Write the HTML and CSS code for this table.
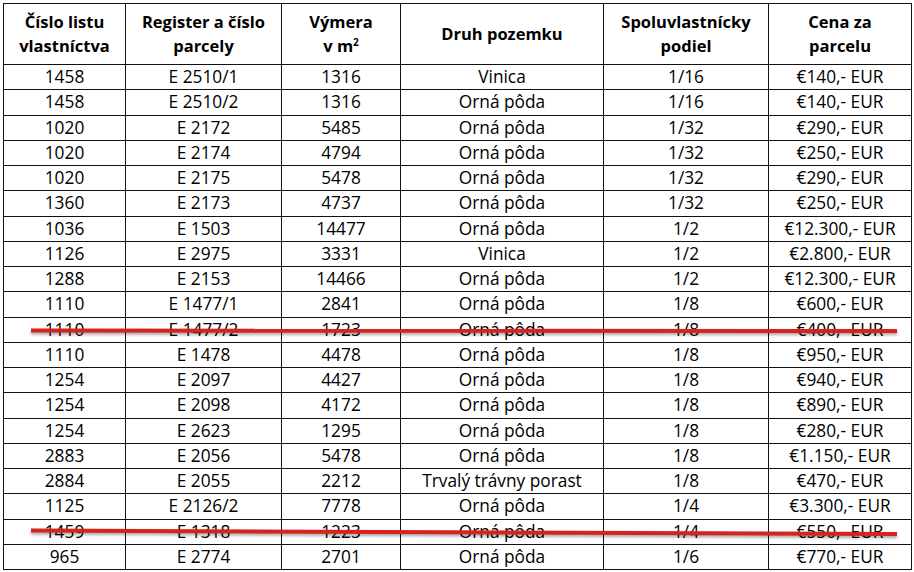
FILE: index.html
```html
<!DOCTYPE html>
<html lang="sk">
<head>
<meta charset="utf-8">
<title>Parcely</title>
<link rel="stylesheet" href="styles.css">
</head>
<body>
<div class="sheet">
<table class="grid">
<colgroup>
<col class="c1"><col class="c2"><col class="c3"><col class="c4"><col class="c5"><col class="c6">
</colgroup>
<thead>
<tr><th>Číslo listu<br>vlastníctva</th><th>Register a číslo<br>parcely</th><th>Výmera<br>v m<sup>2</sup></th><th>Druh pozemku</th><th>Spoluvlastnícky<br>podiel</th><th>Cena za<br>parcelu</th></tr>
</thead>
<tbody>
<tr><td>1458</td><td>E 2510/1</td><td>1316</td><td>Vinica</td><td>1/16</td><td>€140,- EUR</td></tr>
<tr><td>1458</td><td>E 2510/2</td><td>1316</td><td>Orná pôda</td><td>1/16</td><td>€140,- EUR</td></tr>
<tr><td>1020</td><td>E 2172</td><td>5485</td><td>Orná pôda</td><td>1/32</td><td>€290,- EUR</td></tr>
<tr><td>1020</td><td>E 2174</td><td>4794</td><td>Orná pôda</td><td>1/32</td><td>€250,- EUR</td></tr>
<tr><td>1020</td><td>E 2175</td><td>5478</td><td>Orná pôda</td><td>1/32</td><td>€290,- EUR</td></tr>
<tr><td>1360</td><td>E 2173</td><td>4737</td><td>Orná pôda</td><td>1/32</td><td>€250,- EUR</td></tr>
<tr><td>1036</td><td>E 1503</td><td>14477</td><td>Orná pôda</td><td>1/2</td><td>€12.300,- EUR</td></tr>
<tr><td>1126</td><td>E 2975</td><td>3331</td><td>Vinica</td><td>1/2</td><td>€2.800,- EUR</td></tr>
<tr><td>1288</td><td>E 2153</td><td>14466</td><td>Orná pôda</td><td>1/2</td><td>€12.300,- EUR</td></tr>
<tr><td>1110</td><td>E 1477/1</td><td>2841</td><td>Orná pôda</td><td>1/8</td><td>€600,- EUR</td></tr>
<tr><td>1110</td><td>E 1477/2</td><td>1723</td><td>Orná pôda</td><td>1/8</td><td>€400,- EUR</td></tr>
<tr><td>1110</td><td>E 1478</td><td>4478</td><td>Orná pôda</td><td>1/8</td><td>€950,- EUR</td></tr>
<tr><td>1254</td><td>E 2097</td><td>4427</td><td>Orná pôda</td><td>1/8</td><td>€940,- EUR</td></tr>
<tr><td>1254</td><td>E 2098</td><td>4172</td><td>Orná pôda</td><td>1/8</td><td>€890,- EUR</td></tr>
<tr><td>1254</td><td>E 2623</td><td>1295</td><td>Orná pôda</td><td>1/8</td><td>€280,- EUR</td></tr>
<tr><td>2883</td><td>E 2056</td><td>5478</td><td>Orná pôda</td><td>1/8</td><td>€1.150,- EUR</td></tr>
<tr><td>2884</td><td>E 2055</td><td>2212</td><td>Trvalý trávny porast</td><td>1/8</td><td>€470,- EUR</td></tr>
<tr><td>1125</td><td>E 2126/2</td><td>7778</td><td>Orná pôda</td><td>1/4</td><td>€3.300,- EUR</td></tr>
<tr><td>1459</td><td>E 1318</td><td>1223</td><td>Orná pôda</td><td>1/4</td><td>€550,- EUR</td></tr>
<tr><td>965</td><td>E 2774</td><td>2701</td><td>Orná pôda</td><td>1/6</td><td>€770,- EUR</td></tr>
</tbody>
</table>
<svg class="marks" width="907" height="567" viewBox="0 0 907 567" aria-hidden="true">
<line x1="28" y1="327.5" x2="894" y2="328" />
<line x1="28" y1="527.5" x2="894" y2="531" />
</svg>
</div>
</body>
</html>
```
FILE: styles.css
```css
html, body {
  margin: 0;
  padding: 0;
  background: #fff;
}
.sheet {
  position: relative;
  margin: 3px 0 0 3px;
  width: 908px;
}
.grid {
  border-collapse: collapse;
  table-layout: fixed;
  width: 908px;
  font-family: "Open Sans", "DejaVu Sans", sans-serif;
  font-size: 17.3px;
  color: #000;
}
.c1 { width: 122px; }
.c2 { width: 156px; }
.c3 { width: 119px; }
.c4 { width: 203px; }
.c5 { width: 165px; }
.c6 { width: 143px; }
.grid th, .grid td {
  border: 1px solid #111;
  text-align: center;
  vertical-align: middle;
  padding: 0;
  white-space: nowrap;
}
.grid th {
  font-weight: 700;
  font-size: 16.5px;
  line-height: 24px;
  height: 60px;
}
.grid th sup {
  font-size: 10px;
  line-height: 0;
  vertical-align: 6px;
}
.grid td {
  height: 24.25px;
  line-height: 20px;
}
.marks {
  position: absolute;
  top: 0;
  left: 0;
  pointer-events: none;
  overflow: visible;
  filter: drop-shadow(0 2px 1.5px rgba(0, 0, 0, 0.35));
}
.marks line {
  stroke: #d8221c;
  stroke-width: 4;
}
```
